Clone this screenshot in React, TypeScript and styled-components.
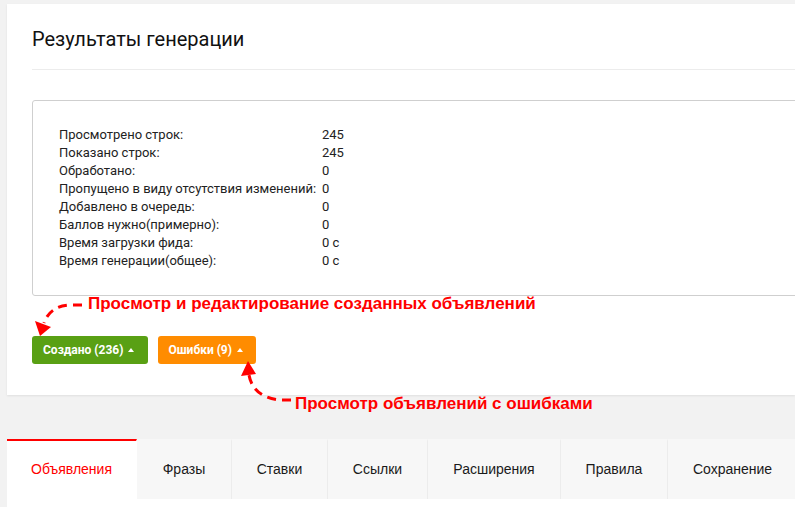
import styled, { createGlobalStyle } from "styled-components";

const GlobalStyle = createGlobalStyle`
  html, body {
    margin: 0;
    padding: 0;
    background: #f2f2f2;
  }
  body {
    font-family: "Roboto", "Liberation Sans", sans-serif;
    color: #222;
  }
`;

const stats = [
  { label: "Просмотрено строк:", value: "245" },
  { label: "Показано строк:", value: "245" },
  { label: "Обработано:", value: "0" },
  { label: "Пропущено в виду отсутствия изменений:", value: "0" },
  { label: "Добавлено в очередь:", value: "0" },
  { label: "Баллов нужно(примерно):", value: "0" },
  { label: "Время загрузки фида:", value: "0 с" },
  { label: "Время генерации(общее):", value: "0 с" },
];

const tabs = [
  { title: "Объявления", width: 130, active: true },
  { title: "Фразы", width: 95 },
  { title: "Ставки", width: 96 },
  { title: "Ссылки", width: 100 },
  { title: "Расширения", width: 133 },
  { title: "Правила", width: 107 },
  { title: "Сохранение", width: 130 },
];

const App = () => {
  return (
    <Page>
      <GlobalStyle />
      <Card>
        <Header>
          <Title>Результаты генерации</Title>
        </Header>
        <StatsBox>
          <StatsGrid>
            {stats.map((s) => (
              <StatRow key={s.label}>
                <span>{s.label}</span>
                <span>{s.value}</span>
              </StatRow>
            ))}
          </StatsGrid>
        </StatsBox>
        <Actions>
          <ActionButton $color="#59a014" $pad="0 14px 0 11px">
            Создано (236)
            <Caret />
          </ActionButton>
          <ActionButton $color="#ff8c00" $pad="0 13px 0 10px">
            Ошибки (9)
            <Caret />
          </ActionButton>
        </Actions>
      </Card>

      <Tabs>
        <TabList>
          {tabs.map((t) => (
            <Tab key={t.title} $active={!!t.active} $width={t.width}>
              {t.title}
            </Tab>
          ))}
        </TabList>
        <TabPanel />
      </Tabs>

      {/* подсказки поверх страницы */}
      <Note $left={88} $top={295}>
        Просмотр и редактирование созданных объявлений
      </Note>
      <Note $left={295} $top={395}>
        Просмотр объявлений с ошибками
      </Note>
      <Arrows viewBox="0 0 795 507" width="795" height="507">
        <path
          d="M82 305 L72 305 C58 305 48 311 44 323"
          fill="none"
          stroke="#ff0000"
          strokeWidth="3"
          strokeDasharray="9 6"
        />
        <polygon points="40,336 35,321 51,327" fill="#ff0000" />
        <path
          d="M291 400 L280 400 C266 399 252 392 249 375"
          fill="none"
          stroke="#ff0000"
          strokeWidth="3"
          strokeDasharray="9 6"
        />
        <polygon points="248,361 241,376 256,374" fill="#ff0000" />
      </Arrows>
    </Page>
  );
};

export default App;

const Page = styled.div`
  position: relative;
  height: 507px;
  overflow: hidden;
  padding-top: 4px;
  box-sizing: border-box;
`;

const Card = styled.div`
  margin-left: 7px;
  padding: 23px 0 31px 25px;
  background: #ffffff;
  box-shadow: 0 1px 2px rgba(0, 0, 0, 0.08);
  overflow: hidden;
`;

const Header = styled.div`
  padding-bottom: 18px;
  border-bottom: 1px solid #ececec;
`;

const Title = styled.h1`
  margin: 0;
  font-family: "Roboto", sans-serif;
  font-weight: 400;
  font-size: 20px;
  line-height: 24px;
  color: #111;
`;

const StatsBox = styled.div`
  margin-top: 30px;
  margin-right: -10px;
  padding: 25px 26px 25px 26px;
  border: 1px solid #cfcfcf;
  border-radius: 3px;
`;

const StatsGrid = styled.div`
  display: flex;
  flex-direction: column;
`;

const StatRow = styled.div`
  display: grid;
  grid-template-columns: 263px auto;
  font-family: "Roboto", sans-serif;
  font-size: 13px;
  line-height: 18px;
  color: #222;
`;

const Actions = styled.div`
  display: flex;
  gap: 10px;
  margin-top: 40px;
`;

const ActionButton = styled.button<{ $color: string; $pad: string }>`
  display: inline-flex;
  align-items: center;
  height: 28px;
  padding: ${(p) => p.$pad};
  border: none;
  border-radius: 3px;
  background: ${(p) => p.$color};
  color: #ffffff;
  font-family: "Roboto", sans-serif;
  font-weight: 700;
  font-size: 12px;
  cursor: pointer;
`;

const Caret = styled.span`
  display: inline-block;
  width: 0;
  height: 0;
  margin-left: 5px;
  margin-top: -1px;
  border-left: 3.5px solid transparent;
  border-right: 3.5px solid transparent;
  border-bottom: 4px solid #ffffff;
`;

const Tabs = styled.div`
  margin: 44px 0 0 7px;
`;

const TabList = styled.div`
  display: flex;
`;

const Tab = styled.div<{ $active: boolean; $width: number }>`
  flex: 0 0 ${(p) => p.$width}px;
  height: 60px;
  box-sizing: border-box;
  display: flex;
  align-items: center;
  justify-content: center;
  border-top: 2px solid ${(p) => (p.$active ? "#ff0000" : "transparent")};
  border-right: 1px solid ${(p) => (p.$active ? "transparent" : "#ececec")};
  background: ${(p) => (p.$active ? "#ffffff" : "#f7f7f7")};
  color: ${(p) => (p.$active ? "#ff0000" : "#1a1a1a")};
  font-family: "Liberation Sans", Arial, sans-serif;
  font-size: 14px;
  padding-bottom: 2px;
`;

const TabPanel = styled.div`
  height: 8px;
  background: #ffffff;
`;

const Note = styled.div<{ $left: number; $top: number }>`
  position: absolute;
  left: ${(p) => p.$left}px;
  top: ${(p) => p.$top}px;
  font-family: "Liberation Sans", Arial, sans-serif;
  font-weight: 700;
  font-size: 17px;
  line-height: 18px;
  color: #ff0000;
  white-space: nowrap;
`;

const Arrows = styled.svg`
  position: absolute;
  left: 0;
  top: 0;
  pointer-events: none;
`;
